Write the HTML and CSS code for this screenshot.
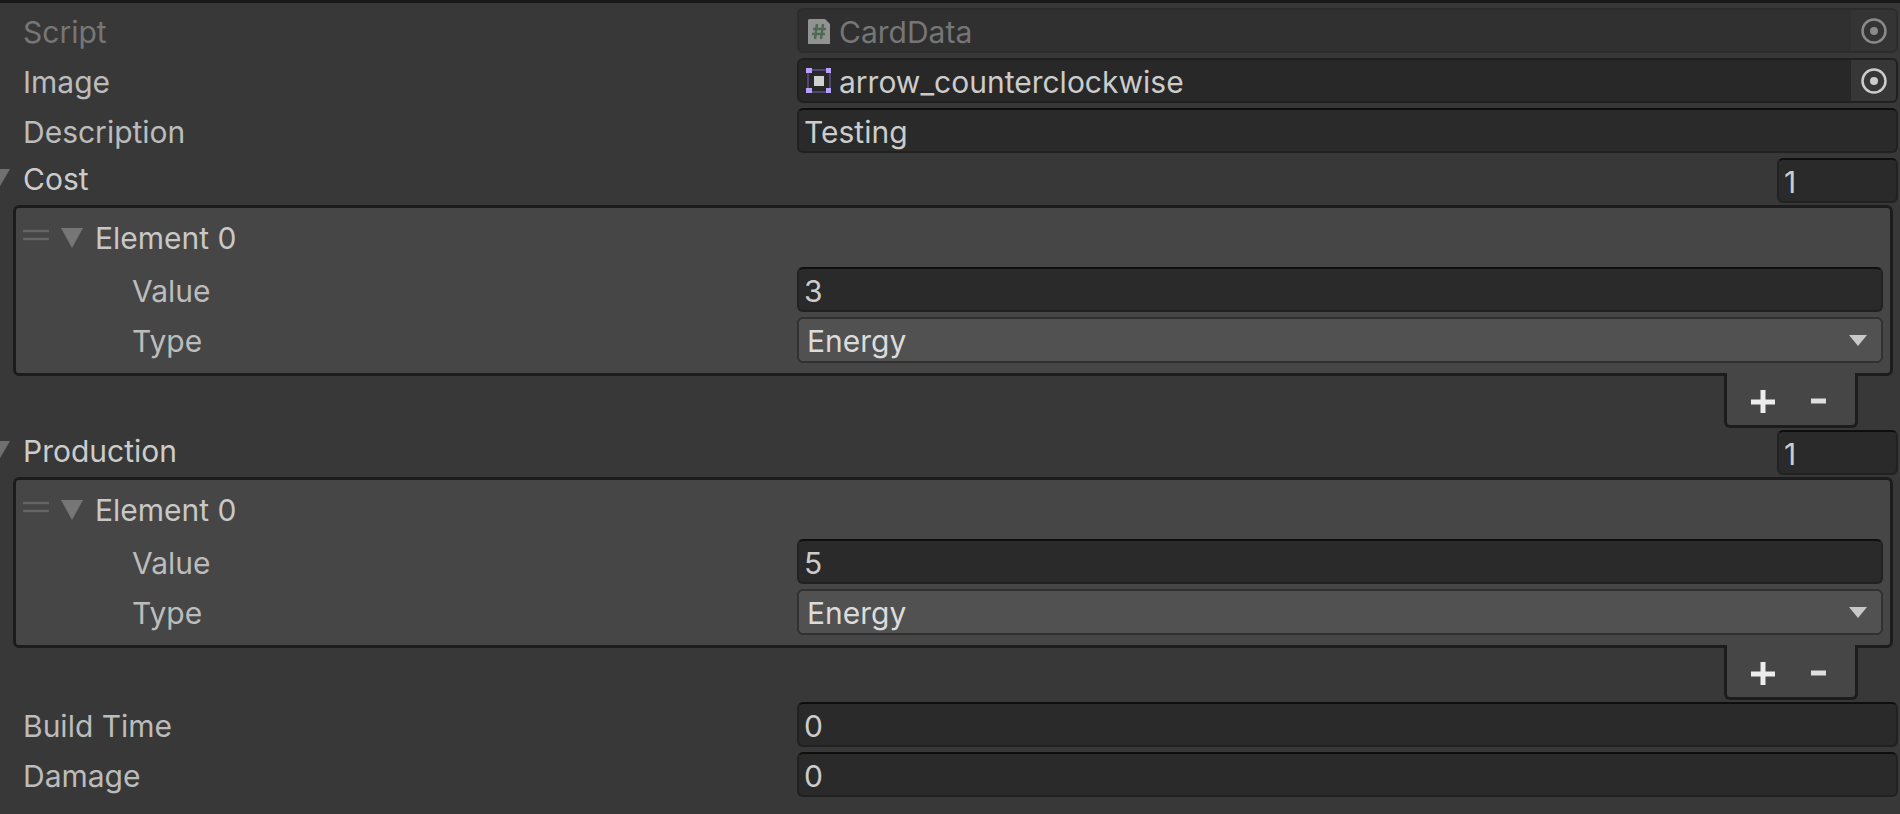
FILE: index.html
```
<!DOCTYPE html>
<html lang="en">
<head>
<meta charset="utf-8">
<title>Card Data Inspector</title>
<link rel="stylesheet" href="styles.css">
</head>
<body>
<form class="inspector">
  <div class="row disabled">
    <label class="label" for="script">Script</label>
    <div class="object-field">
      <svg class="object-icon" width="28" height="28" viewBox="0 0 28 28" aria-hidden="true">
        <path d="M4 2H20L25 7V27H3V3Z" fill="#929292"/>
        <path d="M12 7L10 22M18 7L16 22M8 12H21M7 17H20" stroke="#4d6b50" stroke-width="2.5" fill="none"/>
      </svg>
      <input class="object-name" id="script" type="text" value="CardData" disabled>
      <button class="picker" type="button" aria-label="Select script" disabled>
        <svg width="28" height="28" viewBox="0 0 28 28"><circle cx="14" cy="14" r="11.5" fill="none" stroke="currentColor" stroke-width="2.5"/><circle cx="14" cy="14" r="4" fill="currentColor"/></svg>
      </button>
    </div>
  </div>

  <div class="row">
    <label class="label" for="image">Image</label>
    <div class="object-field">
      <svg class="object-icon" width="28" height="28" viewBox="0 0 28 28" aria-hidden="true">
        <rect x="3" y="3" width="22" height="22" fill="none" stroke="#5f4f8a" stroke-width="1.5"/>
        <path d="M1 1h6v5H1zM21 1h5v5h-5zM1 21h6v5H1zM21 21h5v5h-5z" fill="#b8a0ff"/>
        <rect x="9" y="9" width="10" height="10" fill="#d0d0d0"/>
      </svg>
      <input class="object-name" id="image" type="text" value="arrow_counterclockwise" readonly>
      <button class="picker" type="button" aria-label="Select image">
        <svg width="28" height="28" viewBox="0 0 28 28"><circle cx="14" cy="14" r="11.5" fill="none" stroke="currentColor" stroke-width="2.5"/><circle cx="14" cy="14" r="4" fill="currentColor"/></svg>
      </button>
    </div>
  </div>

  <div class="row">
    <label class="label" for="description">Description</label>
    <input class="field" id="description" type="text" value="Testing">
  </div>

  <section class="list">
    <div class="list-header">
      <button class="foldout" type="button" aria-expanded="true">
        <svg width="23" height="19" viewBox="0 0 23 19"><path d="M-12 0H10L-1 19Z" fill="#707070"/></svg>Cost
      </button>
      <input class="field count" type="text" value="1" aria-label="Cost size">
    </div>
    <div class="list-box">
      <div class="element-header">
        <svg class="handle" width="26" height="12" viewBox="0 0 26 12" aria-hidden="true"><path d="M0 2H26M0 10H26" stroke="#656565" stroke-width="2.5"/></svg>
        <button class="element-toggle" type="button" aria-expanded="true">
          <svg width="22" height="20" viewBox="0 0 22 20"><path d="M0 0H22L11 20Z" fill="#767676"/></svg>Element 0
        </button>
      </div>
      <div class="row">
        <label class="label" for="cost-value">Value</label>
        <input class="field" id="cost-value" type="text" value="3">
      </div>
      <div class="row">
        <label class="label" for="cost-type">Type</label>
        <div class="dropdown">
          <select id="cost-type"><option>Energy</option></select>
          <svg width="18" height="11" viewBox="0 0 18 11" aria-hidden="true"><path d="M0 0H18L9 11Z" fill="#c8c8c8"/></svg>
        </div>
      </div>
    </div>
    <div class="list-footer">
      <button type="button" aria-label="Add cost"><svg width="24" height="24" viewBox="0 0 24 24"><path d="M12 0V23M0 12H24" stroke="#ececec" stroke-width="5"/></svg></button>
      <button type="button" aria-label="Remove cost"><svg width="24" height="24" viewBox="0 0 24 24"><path d="M4 11H19" stroke="#dedede" stroke-width="5"/></svg></button>
    </div>
  </section>

  <section class="list">
    <div class="list-header">
      <button class="foldout" type="button" aria-expanded="true">
        <svg width="23" height="19" viewBox="0 0 23 19"><path d="M-12 0H10L-1 19Z" fill="#707070"/></svg>Production
      </button>
      <input class="field count" type="text" value="1" aria-label="Production size">
    </div>
    <div class="list-box">
      <div class="element-header">
        <svg class="handle" width="26" height="12" viewBox="0 0 26 12" aria-hidden="true"><path d="M0 2H26M0 10H26" stroke="#656565" stroke-width="2.5"/></svg>
        <button class="element-toggle" type="button" aria-expanded="true">
          <svg width="22" height="20" viewBox="0 0 22 20"><path d="M0 0H22L11 20Z" fill="#767676"/></svg>Element 0
        </button>
      </div>
      <div class="row">
        <label class="label" for="production-value">Value</label>
        <input class="field" id="production-value" type="text" value="5">
      </div>
      <div class="row">
        <label class="label" for="production-type">Type</label>
        <div class="dropdown">
          <select id="production-type"><option>Energy</option></select>
          <svg width="18" height="11" viewBox="0 0 18 11" aria-hidden="true"><path d="M0 0H18L9 11Z" fill="#c8c8c8"/></svg>
        </div>
      </div>
    </div>
    <div class="list-footer">
      <button type="button" aria-label="Add production"><svg width="24" height="24" viewBox="0 0 24 24"><path d="M12 0V23M0 12H24" stroke="#ececec" stroke-width="5"/></svg></button>
      <button type="button" aria-label="Remove production"><svg width="24" height="24" viewBox="0 0 24 24"><path d="M4 11H19" stroke="#dedede" stroke-width="5"/></svg></button>
    </div>
  </section>

  <div class="row">
    <label class="label" for="build-time">Build Time</label>
    <input class="field" id="build-time" type="text" value="0">
  </div>
  <div class="row">
    <label class="label" for="damage">Damage</label>
    <input class="field" id="damage" type="text" value="0">
  </div>
</form>
</body>
</html>
```
FILE: styles.css
```
* {
  box-sizing: border-box;
}

body {
  --field-start: calc(42vw - 1px);
  margin: 0;
  background: #383838;
  color: #bcbcbc;
  font: 30px/36px Inter, "Liberation Sans", sans-serif;
}

button,
input,
select {
  margin: 0;
  border: 0;
  padding: 0;
  background: none;
  color: inherit;
  font: inherit;
}

svg {
  flex: none;
}

.inspector {
  border-top: 3px solid #191919;
  padding: 5px 2px 0 0;
}

.row {
  display: grid;
  grid-template-columns: var(--field-start) minmax(0, 1fr);
  align-items: center;
  margin-bottom: 5px;
}

.label {
  padding: 2px 0 0 23px;
}

.field {
  width: 100%;
  height: 45px;
  padding: 2px 5px 0;
  border: 2px solid #212121;
  border-top-color: #0e0e0e;
  border-radius: 6px;
  background: #2a2a2a;
  color: #cccccc;
}

.object-field {
  display: flex;
  align-items: center;
  height: 45px;
  border: 2px solid #202020;
  border-radius: 6px;
  background: #282828;
  color: #cccccc;
}

.object-icon {
  margin-left: 6px;
}

.object-name {
  flex: 1;
  min-width: 0;
  padding: 2px 4px 0 6px;
}

.picker {
  display: grid;
  place-items: center;
  width: 45px;
  height: 100%;
  border-radius: 0 4px 4px 0;
  background: #373737;
}

.disabled {
  color: #767676;
}

.disabled .object-field {
  border-color: #2c2c2c;
  background: #303030;
  color: #767676;
}

.disabled .picker {
  background: #343434;
  color: #8a8a8a;
}

.list {
  margin-bottom: 2px;
}

.list-header {
  display: flex;
  justify-content: space-between;
  margin-bottom: 2px;
}

.foldout {
  display: flex;
  align-items: center;
  padding-bottom: 4px;
  color: #cccccc;
}

.count {
  width: 121px;
}

.list-box {
  margin: 0 5px 0 13px;
  border: 3px solid #1c1c1c;
  border-radius: 6px;
  background: #464646;
  padding: 0 7px 10px 0;
}

.list-box .row {
  grid-template-columns: calc(var(--field-start) - 16px) minmax(0, 1fr);
  margin-bottom: 5px;
}

.list-box .row:last-child {
  margin-bottom: 0;
}

.list-box .label {
  padding-left: 116px;
}

.element-header {
  display: flex;
  align-items: center;
  gap: 12px;
  height: 59px;
  padding-left: 7px;
}

.handle {
  margin-bottom: 5px;
}

.element-toggle {
  display: flex;
  align-items: center;
  gap: 12px;
  padding-top: 1px;
  color: #c8c8c8;
}

.dropdown {
  display: grid;
  align-items: center;
}

.dropdown > * {
  grid-area: 1 / 1;
}

.dropdown select {
  appearance: none;
  width: 100%;
  height: 46px;
  padding: 1px 8px 0;
  border: 2px solid #303030;
  border-radius: 6px;
  background: #515151;
  color: #dcdcdc;
}

.dropdown svg {
  justify-self: end;
  margin-right: 16px;
  pointer-events: none;
}

/* The footer tab overlaps the box's lower border so the two read as one shape. */
.list-footer {
  position: relative;
  display: flex;
  align-items: center;
  justify-content: center;
  gap: 32px;
  width: 134px;
  height: 55px;
  margin: -3px 40px 0 auto;
  padding-top: 5px;
  border: 3px solid #1c1c1c;
  border-top: 0;
  border-radius: 0 0 6px 6px;
  background: #464646;
}

.list-footer button {
  display: flex;
}
```
